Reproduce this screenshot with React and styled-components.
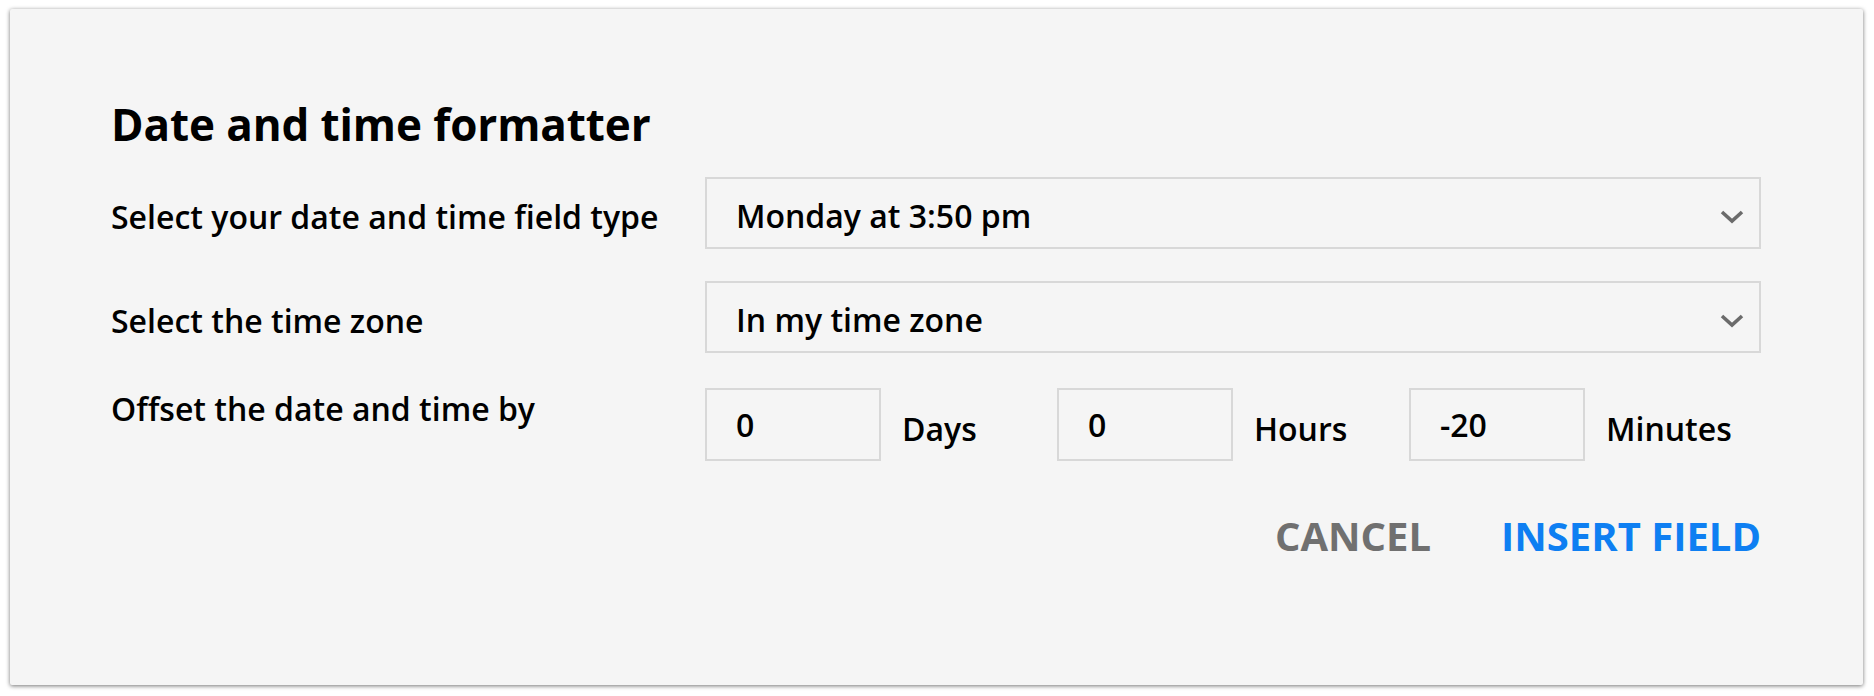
import styled, { createGlobalStyle } from "styled-components";

const GlobalStyle = createGlobalStyle`
  html, body {
    margin: 0;
    padding: 0;
    background: #fff;
  }
  * {
    box-sizing: border-box;
  }
`

const Page = styled.div`
  padding: 9px 11px 11px 10px;
  font-family: "Open Sans", "Noto Sans", sans-serif;
  color: #000;
`

const Dialog = styled.section`
  background: #f5f5f5;
  border-radius: 2px;
  box-shadow: 0 1px 4px rgba(0, 0, 0, 0.55);
  height: 676px;
  padding: 90px 102px 0 101px;
`

const Title = styled.h1`
  margin: 0 0 27px;
  font-size: 44px;
  line-height: 51px;
  font-weight: 700;
  letter-spacing: -0.1px;
`

const Row = styled.div`
  display: grid;
  grid-template-columns: 594px 1fr;
  align-items: center;
  margin-top: ${(props) => props.gap || 0}px;
`

const Label = styled.div`
  font-size: 32px;
  line-height: 42px;
  font-weight: 600;
  padding-top: ${(props) => (props.top ? 0 : 7)}px;
  align-self: ${(props) => (props.top ? "start" : "center")};
`

const Select = styled.div`
  height: 72px;
  border: 2px solid #d8d8d8;
  display: flex;
  align-items: center;
  justify-content: space-between;
  padding: 4px 15px 0 29px;
  font-size: 32px;
  font-weight: 600;
`

const Chevron = () => (
  <svg width="24" height="14" viewBox="0 0 24 14" style={{ marginTop: 4 }}>
    <path d="M2 2 L12 11 L22 2" fill="none" stroke="#6b6b6b" strokeWidth="3.6" />
  </svg>
)

const Offsets = styled.div`
  display: grid;
  grid-template-columns: repeat(3, 1fr);
`

const OffsetGroup = styled.div`
  display: flex;
  align-items: center;
`

const NumberBox = styled.div`
  width: 176px;
  height: 73px;
  border: 2px solid #d8d8d8;
  display: flex;
  align-items: center;
  padding: 0 0 0 29px;
  font-size: 32px;
  font-weight: 600;
`

const Unit = styled.span`
  margin-left: 21px;
  padding-top: 8px;
  font-size: 32px;
  font-weight: 600;
`

const Actions = styled.div`
  display: flex;
  justify-content: flex-end;
  gap: 70px;
  margin-top: 55px;
`

const ActionButton = styled.button`
  background: none;
  border: none;
  padding: 0;
  font-family: inherit;
  font-size: 40px;
  line-height: 1;
  font-weight: 700;
  color: ${(props) => (props.primary ? "#0e7ff2" : "#707070")};
  cursor: pointer;
`

const offsets = [
  { value: "0", unit: "Days" },
  { value: "0", unit: "Hours" },
  { value: "-20", unit: "Minutes" },
]

function App() {
  return (
    <Page>
      <GlobalStyle />
      <Dialog>
        <Title>Date and time formatter</Title>
        <Row>
          <Label>Select your date and time field type</Label>
          <Select>
            Monday at 3:50 pm
            <Chevron />
          </Select>
        </Row>
        <Row gap={32}>
          <Label>Select the time zone</Label>
          <Select>
            In my time zone
            <Chevron />
          </Select>
        </Row>
        <Row gap={35}>
          <Label top>Offset the date and time by</Label>
          <Offsets>
            {offsets.map((o) => (
              <OffsetGroup key={o.unit}>
                <NumberBox>{o.value}</NumberBox>
                <Unit>{o.unit}</Unit>
              </OffsetGroup>
            ))}
          </Offsets>
        </Row>
        <Actions>
          <ActionButton>CANCEL</ActionButton>
          <ActionButton primary>INSERT FIELD</ActionButton>
        </Actions>
      </Dialog>
    </Page>
  );
}

export default App;
